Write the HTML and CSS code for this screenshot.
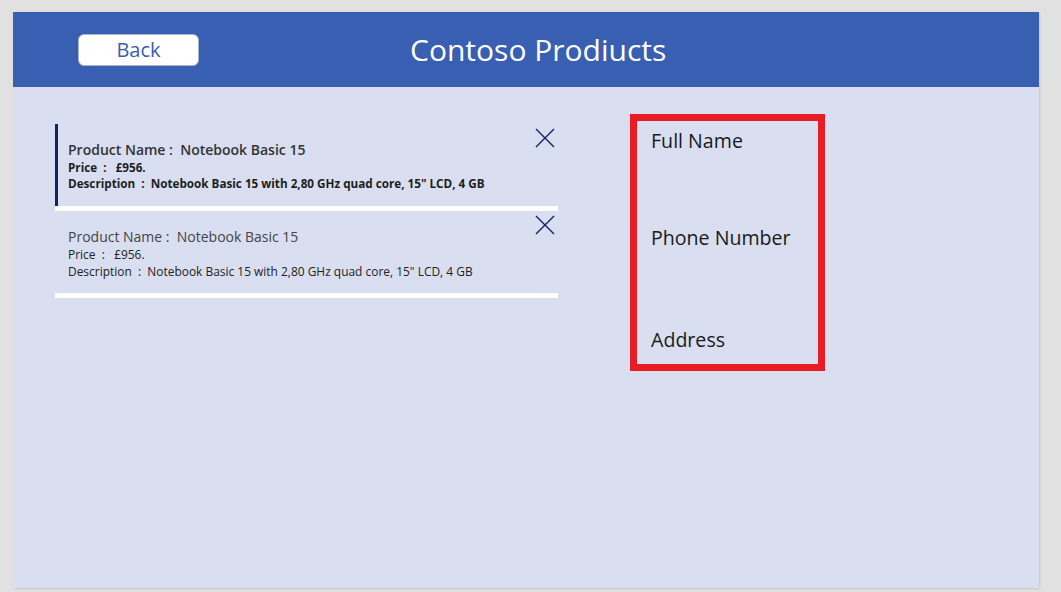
FILE: index.html
```html
<!DOCTYPE html>
<html>
<head>
<meta charset="utf-8">
<link rel="stylesheet" href="styles.css">
</head>
<body>
<div class="app">
  <header class="header">
    <button class="back">Back</button>
    <h1 class="title">Contoso Prodiucts</h1>
  </header>
  <main class="main">
    <section class="gallery">
      <div class="item selected">
        <div class="item-body">
          <div class="name">Product Name :&nbsp; Notebook Basic 15</div>
          <div class="line">Price&nbsp; :&nbsp;&nbsp; £956.</div>
          <div class="line">Description&nbsp; :&nbsp; Notebook Basic 15 with 2,80 GHz quad core, 15" LCD, 4 GB</div>
        </div>
        <svg class="close" viewBox="0 0 20 20" width="20" height="20"><path d="M1 1 L19 19 M19 1 L1 19" stroke="#13206b" stroke-width="1.4" fill="none"/></svg>
      </div>
      <div class="sep"></div>
      <div class="item">
        <div class="item-body">
          <div class="name">Product Name :&nbsp; Notebook Basic 15</div>
          <div class="line">Price&nbsp; :&nbsp;&nbsp; £956.</div>
          <div class="line">Description&nbsp; :&nbsp; Notebook Basic 15 with 2,80 GHz quad core, 15" LCD, 4 GB</div>
        </div>
        <svg class="close" viewBox="0 0 20 20" width="20" height="20"><path d="M1 1 L19 19 M19 1 L1 19" stroke="#13206b" stroke-width="1.4" fill="none"/></svg>
      </div>
      <div class="sep"></div>
    </section>
    <section class="form">
      <div class="field">Full Name</div>
      <div class="field">Phone Number</div>
      <div class="field">Address</div>
    </section>
  </main>
</div>
</body>
</html>
```
FILE: styles.css
```css
html, body {
  margin: 0;
  padding: 0;
}
body {
  background: #e1e1e1;
  font-family: "Open Sans", "Noto Sans", sans-serif;
  padding: 12px 0 0 13px;
  height: 592px;
  box-sizing: border-box;
  overflow: hidden;
}
.app {
  width: 1026px;
  height: 576px;
  background: #d9dff1;
  display: flex;
  flex-direction: column;
  box-shadow: 1px 1px 2px rgba(0,0,0,0.12);
}
.header {
  height: 75px;
  background: #385fb1;
  display: flex;
  align-items: center;
  flex-shrink: 0;
}
.back {
  margin-left: 65px;
  width: 121px;
  height: 32px;
  margin-top: 1px;
  background: #fff;
  border: 1px solid #a9b3c9;
  border-radius: 6px;
  color: #3a5eaa;
  font-family: "Open Sans", sans-serif;
  font-size: 20px;
  font-weight: 500;
  padding: 0;
  line-height: 28px;
}
.title {
  margin: 0 0 0 211px;
  color: #fff;
  font-weight: 400;
  font-size: 30px;
  line-height: 34px;
  margin-top: 0;
}
.main {
  display: flex;
  align-items: flex-start;
  padding: 27px 0 0 42px;
}
.gallery {
  width: 503px;
  margin-top: 10px;
  display: flex;
  flex-direction: column;
}
.item {
  height: 82px;
  display: flex;
  position: relative;
  box-sizing: border-box;
  padding-left: 13px;
}
.item.selected {
  border-left: 3px solid #13206b;
  padding-left: 10px;
}
.item-body {
  padding-top: 16px;
  color: #3d3d3d;
}
.item.selected .item-body {
  padding-top: 17px;
}
.name {
  font-size: 14px;
  line-height: 20px;
  color: #444;
}
.line {
  font-size: 11.95px;
  line-height: 16.5px;
  color: #222;
}
.selected .name {
  font-weight: 600;
  color: #333;
  line-height: 18px;
}
.selected .line {
  font-weight: 700;
  color: #1e1e1e;
  font-size: 11.7px;
  line-height: 16px;
}
.close {
  position: absolute;
  right: 3px;
  top: 4px;
}
.sep {
  height: 5px;
  background: #fff;
}
.form {
  margin-left: 72px;
  width: 195px;
  height: 257px;
  box-sizing: border-box;
  border: 7px solid #e81c22;
  padding: 7px 0 0 14px;
  display: flex;
  flex-direction: column;
}
.field {
  font-size: 19.6px;
  line-height: 26px;
  color: #1a1a1a;
}
.field + .field {
  margin-top: 71px;
}
.field:last-child {
  margin-top: 76px;
}
```
